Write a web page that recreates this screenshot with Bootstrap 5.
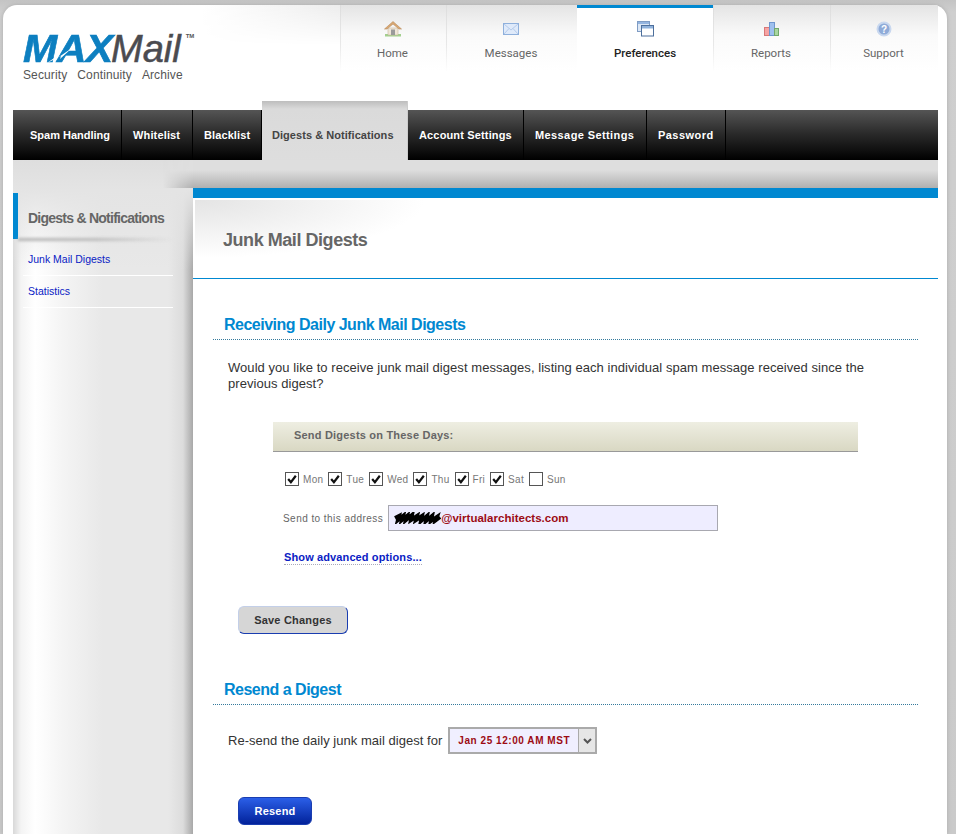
<!DOCTYPE html>
<html lang="en"><head><meta charset="utf-8"><title>MAX Mail</title>
<link href="https://cdn.jsdelivr.net/npm/bootstrap@5.3.0/dist/css/bootstrap.min.css" rel="stylesheet">
<style>
html,body{height:834px;overflow:hidden}
body{background:linear-gradient(#c4c4c4,#cfcfcf 12px,#cacaca);font-family:"Liberation Sans",Arial,sans-serif;padding:5px 9px 0 3px}
.shell{background:#fff;border-radius:14px 14px 0 0;height:829px;padding-right:9px;position:relative;overflow:hidden;box-shadow:0 0 4px #aaa}
.headbar{height:105px;padding-left:10px;position:relative}
.headbar::before{content:"";position:absolute;left:200px;right:0;top:0;height:40px;background:linear-gradient(100deg,#fff,#ebebeb 20%,#f4f4f4 60%,#e8e8e8);-webkit-mask-image:linear-gradient(#000,transparent)}
.logowrap{width:327px;padding:28px 0 0 10px;position:relative}
.logomark{font-size:38px;line-height:33px;height:33px;white-space:nowrap;position:relative}
.logomax{display:inline-block;color:#0d7fc0;font-weight:700;font-style:italic;letter-spacing:-.5px;-webkit-text-stroke:.6px #0d7fc0;transform:scaleX(1.08);transform-origin:0 50%;width:88px}
.logomail{font-style:italic;color:#4b4b50;-webkit-text-stroke:.5px #4b4b50}
.logotm{font-size:6px;line-height:0;vertical-align:24px;color:#555;margin-left:5px;font-weight:700}
.logobolt{position:absolute;left:24px;top:15px}
.logotag{font-size:12px;color:#555;margin-top:2px;line-height:14px;white-space:nowrap;letter-spacing:.12px}
.logotag span{margin-right:10px}
.maintabs{position:relative;z-index:1;height:70px}
.maintab{display:block;text-align:center;color:#666;font-family:"Roboto","Liberation Sans",sans-serif;font-size:11.5px;padding:14px 2px 0 0;height:66px;border-left:1px solid;border-image:linear-gradient(#ddd,#e8e8e8 60%,#fff) 1;background:linear-gradient(#e4e4e4,#fafafa 30px,#fff);text-decoration:none}
.maintab svg{display:block;margin:0 auto 6px;height:20px;width:20px}
.mt1{width:106px}.mt2{width:131px}.mt3{width:136px}.mt4{width:117px}.mt5{width:108px}
.maintab.active{background:#fff;color:#222;border-top:3px solid #0088d1;padding:11px 0 0;font-weight:500;height:70px;border-left:0;border-image:none}
.subnav{height:50px;margin-left:10px;background:linear-gradient(#555,#2c2c2c 45%,#000);position:relative}
.subnav a{display:block;color:#fff;font-weight:700;font-size:11px;line-height:50px;padding:0 11px;border-right:1px solid #000;text-decoration:none;white-space:nowrap}
.subnav a.first{padding-left:17px}
.subnav a.w1{width:109px}.subnav a.w2{width:71px;letter-spacing:.15px}.subnav a.w3{width:69px;letter-spacing:.1px}.subnav a.w5{width:116px;letter-spacing:.15px}.subnav a.w6{width:123px;letter-spacing:.4px}.subnav a.w7{width:79px;letter-spacing:.45px}
.subnav a.current{color:#444;width:146px;height:69px;margin-top:-9px;padding:9px 10px;position:relative;border-right:1px solid #ccc;background:linear-gradient(#bdbdbd,#dadada 8px,#dedede);letter-spacing:.05px}
.body-row{margin-left:10px;height:674px;position:relative;background:linear-gradient(#dedede,#e4e4e4 30px,rgba(232,232,232,0) 110px),linear-gradient(90deg,#d8d8d8,#f4f4f4 8px,#fff 22px,#f4f4f4 50px,#e8e8e8 90px,#e8e8e8 155px,#dcdcdc 170px,#a8a8a8 180px)}
.bandfade{position:absolute;left:150px;right:0;top:0;height:28px;background:linear-gradient(#dedede,#dedede 10px,#b0b0b0);-webkit-mask-image:linear-gradient(90deg,transparent,#000 30px)}
.side{width:180px;padding-top:33px;position:relative}
.sidehead{height:46px;border-left:5px solid #0088d1;padding-left:10px;font-size:14px;font-weight:700;color:#666;line-height:50px;letter-spacing:-.75px;margin-bottom:5px;white-space:nowrap;position:relative}
.sidehead::after{content:"";position:absolute;left:0;right:20px;bottom:-2px;height:3px;background:linear-gradient(90deg,#b4b4b4,#bbb 50%,transparent);filter:blur(1.500px)}
.sidelink{display:block;margin-left:10px;width:150px;height:32px;line-height:31px;padding-left:5px;border-bottom:1px solid #fff;color:#0a21c4;font-size:10.5px;text-decoration:none}
.panel{width:745px;background:#fff;border-top:10px solid #0088d1;margin-top:28px;height:646px;flex:none;position:relative}
.panelhead{height:81px;border-bottom:1px solid #0088d1;background:radial-gradient(ellipse 230px 58px at 0 0,#e4e4e4,#fff) 2px 2px no-repeat;padding:29px 0 0 30px;font-size:18px;font-weight:700;color:#666;letter-spacing:-.45px;line-height:26px;position:relative}
.sect{margin:35px 20px 0;border-bottom:1px dotted #357a9c;height:26px;padding-left:11px;color:#0088d1;font-weight:700;font-size:16px;letter-spacing:-.5px;line-height:21px}
.sect.second{margin-top:45px}
.lead-p{margin:20px 40px 0 35px;font-size:13px;line-height:16px;color:#333;letter-spacing:.05px}
.dayshead{margin:30px 0 0 80px;width:585px;height:30px;border-bottom:1px solid #999;background:linear-gradient(#eeeee2,#d9d8c3);color:#666;font-weight:700;font-size:11px;letter-spacing:.2px;padding-left:21px;line-height:27px}
.days{margin:19px 0 0 92px;height:16px;font-size:10px;color:#777;align-items:center;letter-spacing:.3px}
.ck{width:14px;height:14px;border:1px solid #555;display:inline-block;margin-right:4px;flex:none}
.ck svg{display:block;width:12px;height:12px}
.dayitem{margin-right:5px;white-space:nowrap;display:flex;align-items:center}
.addr{margin:18px 0 0 90px;align-items:center;font-size:10px;color:#666;letter-spacing:.45px}
.addrbox{margin-left:5px;width:330px;height:26px;background:#eeedff;border:1px solid #a8a8b0;color:#9c0b14;font-weight:700;font-size:11.5px;line-height:24px;padding-left:5px;letter-spacing:.02px;white-space:nowrap;display:flex;align-items:center}
.scrib{flex:none;display:block}
.advlink{display:inline-block;margin:20px 0 0 91px;color:#0a21c4;font-weight:700;font-size:11px;border-bottom:1px dotted #aab;line-height:13px;text-decoration:none;letter-spacing:.12px}
.btn-save,.btn-resend{display:block;font-family:inherit;font-size:11px;font-weight:700;letter-spacing:.2px;border-radius:6px;padding:0;height:28px}
.btn-save{margin:38px 0 0 45px;width:110px;background:#d6d6d6;color:#333;border:1px solid #c3cfe8;border-right-color:#1a3db0;border-bottom-color:#1a3db0}
.btn-resend{margin:43px 0 0 45px;width:74px;color:#fff;border:1px solid #1a3db0;background:linear-gradient(#2b5fe8,#02229a)}
.resend-row{margin:22px 0 0 35px;align-items:center;font-size:13px;color:#333;height:27px;letter-spacing:.03px}
.sel{margin-left:6px;width:149px;height:27px;border:2px solid #aaa;background:#f0efff;color:#9c0b14;font-weight:700;font-size:10px;line-height:23px;letter-spacing:.55px;padding-left:8px;position:relative;white-space:nowrap}
.selbtn{position:absolute;right:0;top:0;bottom:0;width:17px;background:#e6e6e6;border-left:1px solid #aaa}
.selbtn svg{display:block;margin:9px auto 0}
</style></head><body>
<div class="shell">
  <div class="headbar d-flex">
    <div class="logowrap">
      <div class="logomark"><span class="logomax">MAX</span><span class="logomail">Mail</span><span class="logotm">TM</span>
        <svg class="logobolt" width="25" height="15" viewBox="0 0 25 15"><path d="M0 15 10 8 9 11 25 0 13 11 14 8z" fill="#fff"/></svg></div>
      <div class="logotag"><span>Security</span><span>Continuity</span>Archive</div>
    </div>
    <nav class="maintabs d-flex">
      <a class="maintab mt1" href="#"><svg viewBox="0 0 20 20"><rect x="2" y="15" width="16" height="2.500" fill="#a3cf8e"/><path d="M5 9v7h10V9z" fill="#efe6d8" stroke="#c9b89f" stroke-width=".6"/><path d="M1.500 10 10 2.500l8.500 7.500-2.500 0L10 5l-6 5z" fill="#d9a873" stroke="#b98c5c" stroke-width=".6"/><rect x="8" y="10.500" width="4" height="5.500" fill="#9a9a9a"/></svg>Home</a>
      <a class="maintab mt2" href="#"><svg viewBox="0 0 20 20"><rect x="2.500" y="4.500" width="15" height="11" fill="#dfeafa" stroke="#8fb0dc"/><path d="M3 5l7 6 7-6M3 15l5-5.500M17 15l-5-5.500" fill="none" stroke="#a9c3e6" stroke-width=".8"/></svg>Messages</a>
      <a class="maintab mt3 active" href="#"><svg viewBox="0 0 20 20"><rect x="2.500" y="2.500" width="12" height="10" fill="#dce7f5" stroke="#7f9cc4"/><rect x="3" y="3" width="11" height="2" fill="#94b5e0"/><rect x="6.500" y="6.500" width="12" height="10.500" fill="#fff" stroke="#4d6f9c"/><rect x="7" y="7" width="11" height="2.500" fill="#8fb2dc"/></svg>Preferences</a>
      <a class="maintab mt4" href="#"><svg viewBox="0 0 20 20"><rect x="3.500" y="8.500" width="5" height="8" fill="#f6a3a3" stroke="#d87878"/><rect x="8.500" y="3.500" width="5" height="13" fill="#9fc0ee" stroke="#6f96cf"/><rect x="13.500" y="9.500" width="4" height="7" fill="#a8d6a0" stroke="#72a86c"/></svg>Reports</a>
      <a class="maintab mt5" href="#"><svg viewBox="0 0 20 20"><circle cx="10" cy="10" r="6.500" fill="#8fabd8" stroke="#c9d8ef" stroke-width="2"/><text x="10" y="13.500" font-size="10" font-weight="700" text-anchor="middle" fill="#fff" font-family="Liberation Sans">?</text></svg>Support</a>
    </nav>
  </div>
  <div class="subnav d-flex">
    <a class="first w1" href="#">Spam Handling</a><a class="w2" href="#">Whitelist</a><a class="w3" href="#">Blacklist</a><a class="current" href="#">Digests &amp; Notifications</a><a class="w5" href="#">Account Settings</a><a class="w6" href="#">Message Settings</a><a class="w7" href="#">Password</a>
  </div>
  <div class="body-row d-flex">
    <div class="bandfade"></div>
    <aside class="side flex-none">
      <div class="sidehead">Digests &amp; Notifications</div>
      <a class="sidelink" href="#">Junk Mail Digests</a>
      <a class="sidelink" href="#">Statistics</a>
    </aside>
    <main class="panel">
      <div class="panelhead">Junk Mail Digests</div>
      <div class="sect">Receiving Daily Junk Mail Digests</div>
      <p class="lead-p">Would you like to receive junk mail digest messages, listing each individual spam message received since the previous digest?</p>
      <div class="dayshead">Send Digests on These Days:</div>
      <div class="days d-flex">
        <label class="dayitem"><span class="ck"><svg viewBox="0 0 11 11"><path d="M2 5.500 4.500 8.500 9 2.500" fill="none" stroke="#111" stroke-width="2"/></svg></span>Mon</label>
        <label class="dayitem"><span class="ck"><svg viewBox="0 0 11 11"><path d="M2 5.500 4.500 8.500 9 2.500" fill="none" stroke="#111" stroke-width="2"/></svg></span>Tue</label>
        <label class="dayitem"><span class="ck"><svg viewBox="0 0 11 11"><path d="M2 5.500 4.500 8.500 9 2.500" fill="none" stroke="#111" stroke-width="2"/></svg></span>Wed</label>
        <label class="dayitem"><span class="ck"><svg viewBox="0 0 11 11"><path d="M2 5.500 4.500 8.500 9 2.500" fill="none" stroke="#111" stroke-width="2"/></svg></span>Thu</label>
        <label class="dayitem"><span class="ck"><svg viewBox="0 0 11 11"><path d="M2 5.500 4.500 8.500 9 2.500" fill="none" stroke="#111" stroke-width="2"/></svg></span>Fri</label>
        <label class="dayitem"><span class="ck"><svg viewBox="0 0 11 11"><path d="M2 5.500 4.500 8.500 9 2.500" fill="none" stroke="#111" stroke-width="2"/></svg></span>Sat</label>
        <label class="dayitem"><span class="ck"></span>Sun</label>
      </div>
      <div class="addr d-flex">Send to this address<div class="addrbox"><svg class="scrib" width="47" height="12" viewBox="0 0 47 12"><path d="M1 6 5 4 4 8 9 4 8 8 13 4 12 8 18 3 17 8 23 4 22 8 28 4 27 9 33 4 32 9 38 4 37 9 43 5 42 8 46 5" fill="none" stroke="#000" stroke-width="4"/></svg>@virtualarchitects.com</div></div>
      <a class="advlink" href="#">Show advanced options...</a>
      <button class="btn-save" type="button">Save Changes</button>
      <div class="sect second">Resend a Digest</div>
      <div class="resend-row d-flex">Re-send the daily junk mail digest for<div class="sel">Jan 25 12:00 AM MST<span class="selbtn"><svg width="9" height="6" viewBox="0 0 9 6"><path d="M1 1l3.500 3.500L8 1" fill="none" stroke="#555" stroke-width="2"/></svg></span></div></div>
      <button class="btn-resend" type="button">Resend</button>
    </main>
  </div>
</div>
<script src="https://cdn.jsdelivr.net/npm/bootstrap@5.3.0/dist/js/bootstrap.bundle.min.js"></script>
</body></html>
